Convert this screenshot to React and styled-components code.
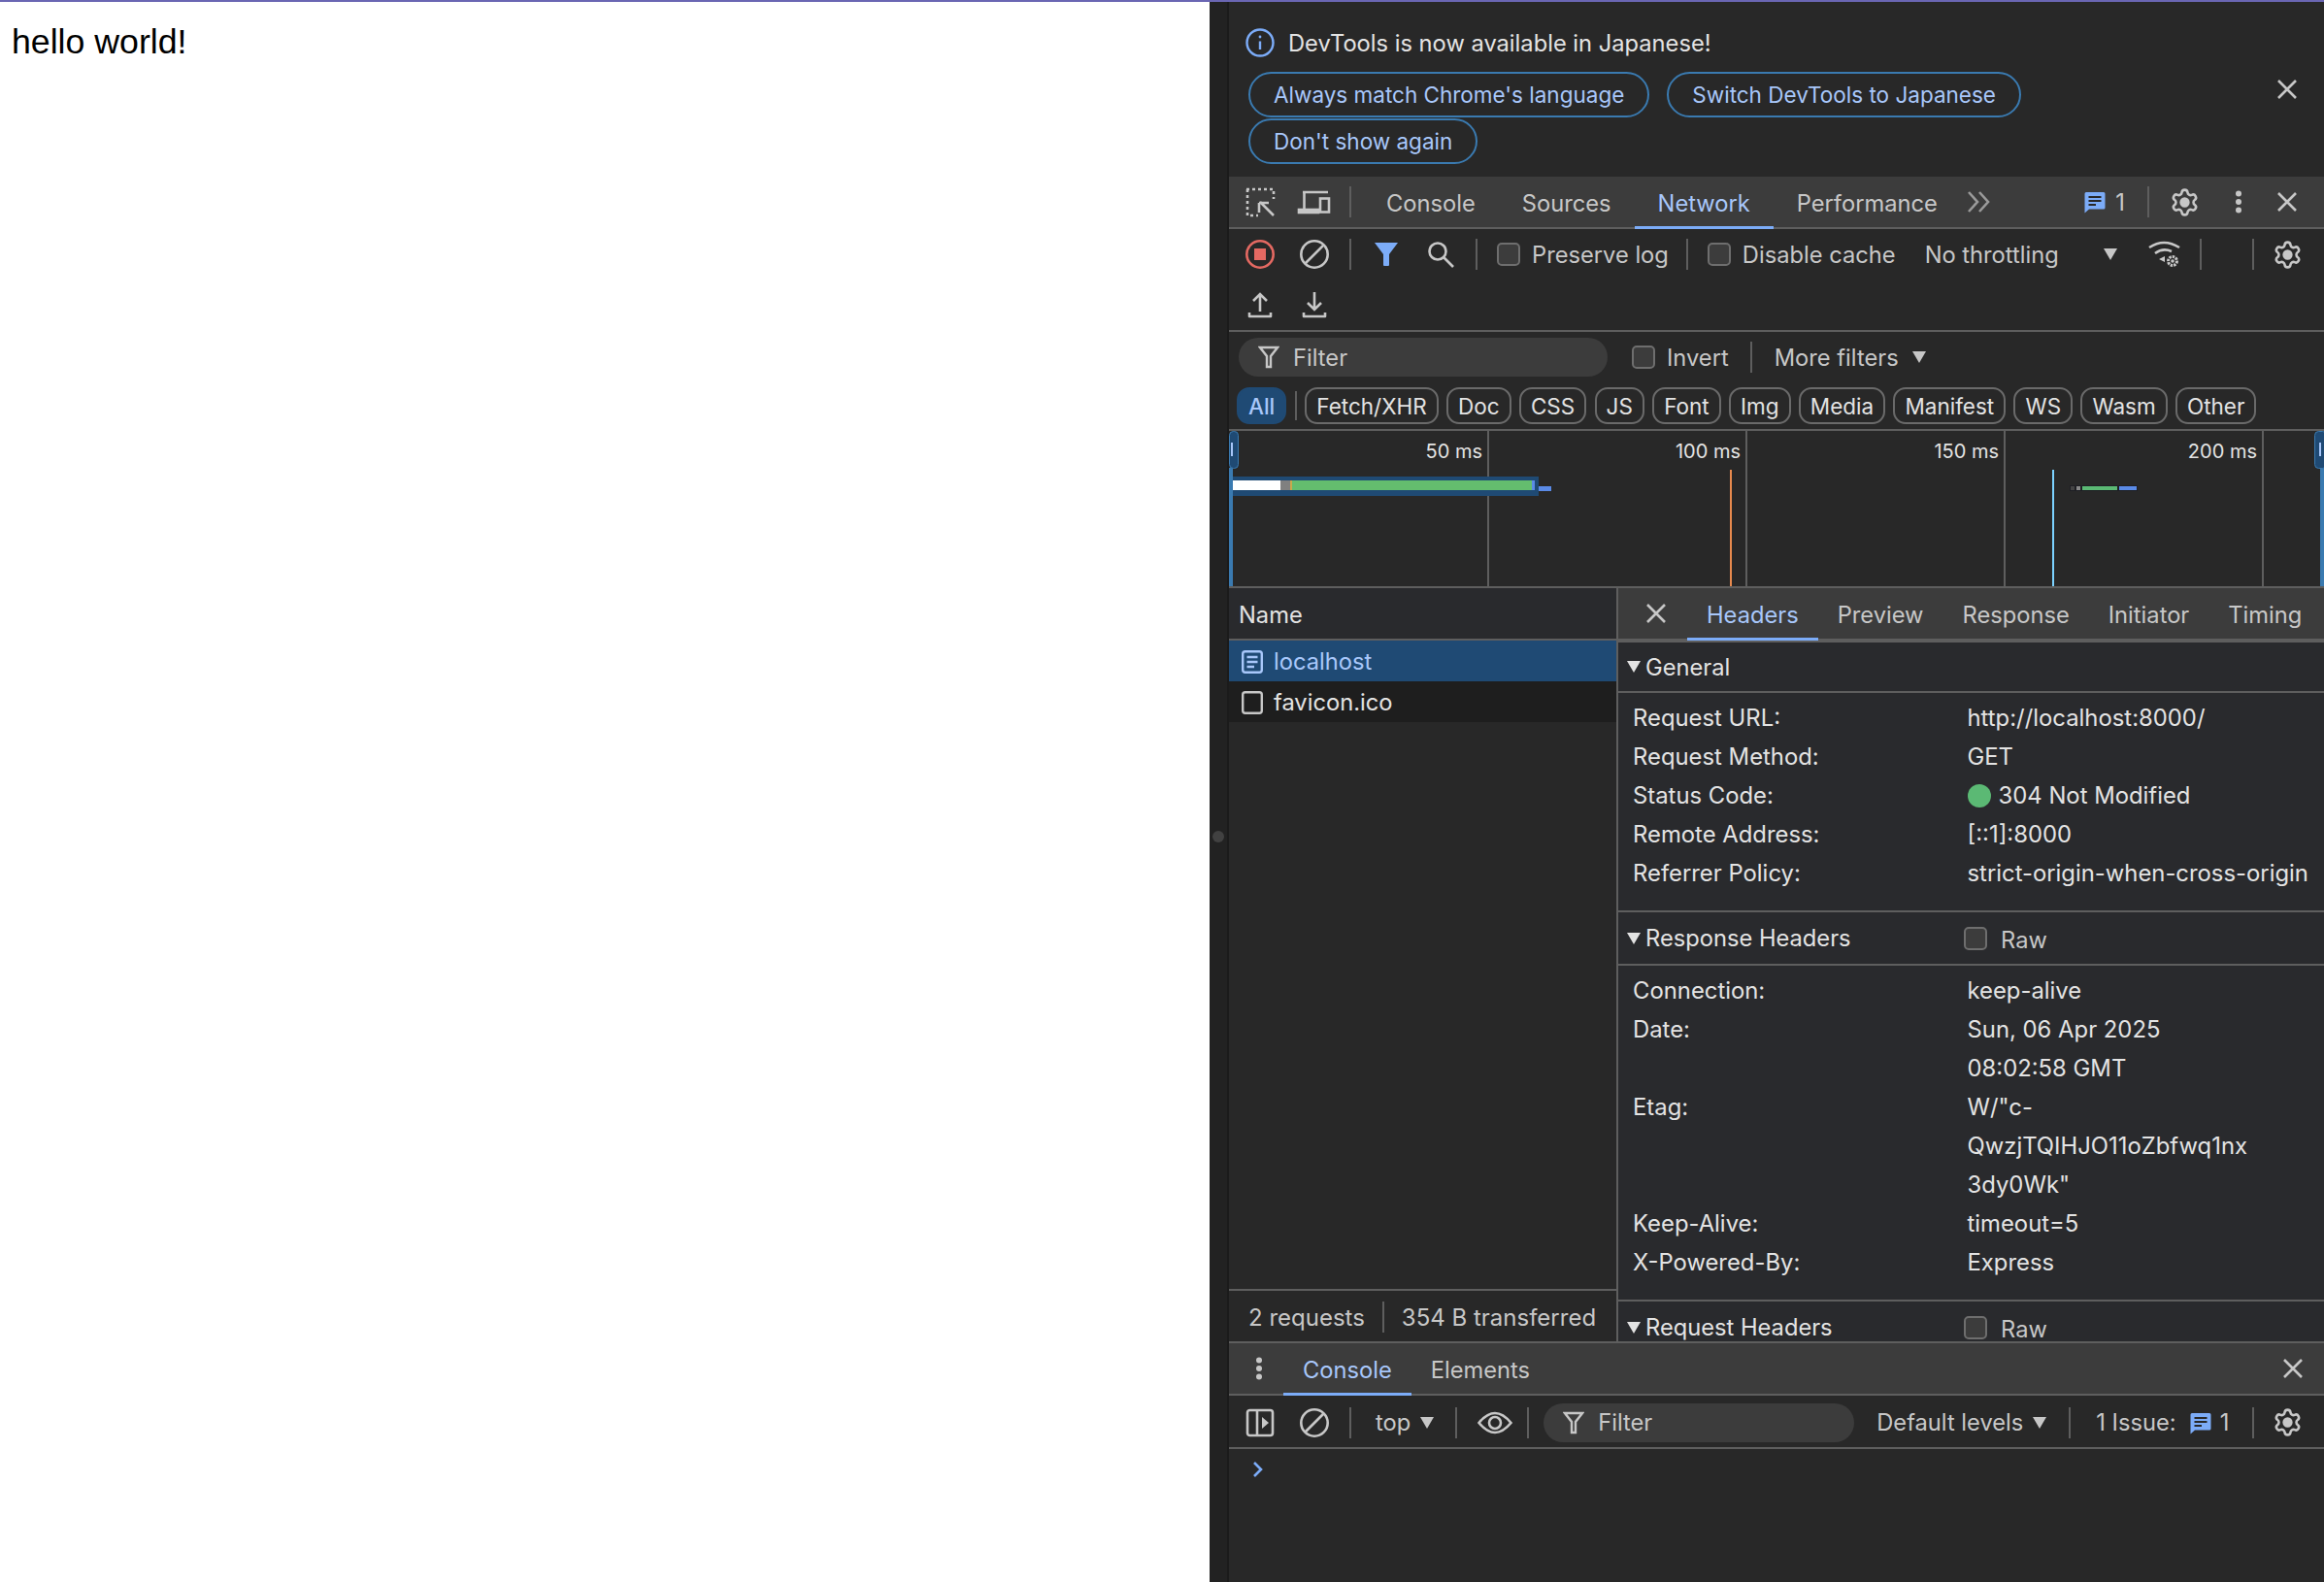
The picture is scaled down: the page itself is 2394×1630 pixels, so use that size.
import styled, { createGlobalStyle } from "styled-components";
import { Settings } from "lucide-react";

const GlobalStyle = createGlobalStyle`
    html, body {
        margin: 0;
        padding: 0;
        background: #fff;
        overflow: hidden;
    }
    * {
        box-sizing: border-box;
    }
`;

const line = "#5e5e5e";
const blue = "#a8c7fa";
const accent = "#7cacf8";

const Page = styled.div`
    width: 2394px;
    height: 1630px;
    display: flex;
    flex-direction: column;
    font-family: Inter, "Liberation Sans", sans-serif;
    font-size: 23.7px;
    color: #e3e3e3;
`;

const TopStrip = styled.div`
    height: 2px;
    flex: none;
    background: #6a66b3;
`;

const Body = styled.div`
    flex: 1;
    min-height: 0;
    display: flex;
`;

const Inspected = styled.div`
    width: 1246px;
    flex: none;
    background: #fff;
    padding: 20px 12px;
`;

const Hello = styled.div`
    font-family: "Liberation Sans", Arial, sans-serif;
    font-size: 35.7px;
    line-height: 42px;
    color: #000;
`;

const Resizer = styled.div`
    width: 20px;
    flex: none;
    background: #222;
    border-right: 2px solid #1b1b1b;
    display: flex;
    justify-content: center;
    padding-top: 854px;
`;

const ResizerDot = styled.div`
    width: 12px;
    height: 12px;
    border-radius: 50%;
    background: #414141;
`;

const DevTools = styled.div`
    flex: 1;
    min-width: 0;
    display: flex;
    flex-direction: column;
    background: #282828;
`;

const Infobar = styled.div`
    height: 180px;
    flex: none;
    display: flex;
    align-items: center;
    padding: 0 10px 0 20px;
`;

const InfoMain = styled.div`
    flex: 1;
    padding-top: 14px;
`;

const InfoTitle = styled.div`
    display: flex;
    align-items: center;
    gap: 14px;
    margin: 0 0 15px -3px;
    height: 30px;
`;

const InfoActions = styled.div`
    display: flex;
    flex-wrap: wrap;
    gap: 1px 18px;
    width: 900px;
`;

const PillButton = styled.button`
    height: 47px;
    padding: 0 24px;
    border: 2px solid #3a7ab0;
    border-radius: 24px;
    background: transparent;
    color: ${blue};
    font-family: inherit;
    font-size: 22.5px;
`;

const TabBar = styled.div`
    height: ${(p) => p.$h || 54}px;
    flex: none;
    display: flex;
    align-items: stretch;
    background: #3c3c3c;
    border-bottom: ${(p) => p.$line || 2}px solid ${line};
    padding: ${(p) => p.$pad || "0 10px 0 4px"};
`;

const Tab = styled.div`
    display: flex;
    align-items: center;
    padding: 0 ${(p) => p.$pad || 24}px;
    margin-bottom: -2px;
    margin-left: ${(p) => p.$ml || 0}px;
    color: ${(p) => (p.$active ? blue : "#c7c7c7")};
    box-shadow: ${(p) => (p.$active ? `inset 0 -3px 0 ${accent}` : "none")};
`;

const Toolbar = styled.div`
    height: ${(p) => p.$h || 52}px;
    flex: none;
    display: flex;
    align-items: center;
    padding: ${(p) => p.$top || 0}px 10px 0 4px;
    color: #c7c7c7;
`;

const ToolbarStack = styled.div`
    flex: none;
    border-bottom: 2px solid ${line};
`;

const IconSlot = styled.span`
    width: ${(p) => p.$w || 56}px;
    height: 36px;
    flex: none;
    align-self: center;
    display: flex;
    align-items: center;
    justify-content: center;
    color: ${(p) => p.$color || "#c7c7c7"};
    margin-left: ${(p) => p.$ml || 0}px;
`;

const Sep = styled.span`
    width: 2px;
    height: 32px;
    flex: none;
    background: ${line};
    margin: 0 ${(p) => (p.$m === undefined ? 8 : p.$m)}px;
    margin-left: ${(p) => (p.$ml === undefined ? "" : `${p.$ml}px`)};
    align-self: center;
`;

const Spacer = styled.span`
    flex: 1;
`;

const Gear = styled(Settings)`
    circle {
        fill: currentColor;
    }
`;

const CheckLabel = styled.label`
    display: flex;
    align-items: center;
    gap: 12px;
    margin: 0 ${(p) => p.$mr || 10}px 0 ${(p) => p.$ml || 12}px;
    color: #c7c7c7;
`;

const Checkbox = styled.span`
    width: 24px;
    height: 24px;
    flex: none;
    background: #3c3c3c;
    border: 2px solid #6e6e6e;
    border-radius: 5px;
`;

const Select = styled.span`
    display: flex;
    align-items: center;
    gap: ${(p) => p.$gap || 10}px;
    margin-left: ${(p) => p.$ml || 0}px;
    margin-right: ${(p) => p.$mr || 0}px;
    color: #c7c7c7;
`;

const FilterPill = styled.div`
    width: ${(p) => p.$w}px;
    height: 40px;
    flex: none;
    display: flex;
    align-items: center;
    gap: 14px;
    padding-left: 20px;
    border-radius: 20px;
    background: #3c3c3c;
    color: #c7c7c7;
    margin-left: ${(p) => p.$ml || 0}px;
`;

const ChipRow = styled.div`
    height: 50px;
    flex: none;
    display: flex;
    align-items: center;
    gap: 8.3px;
    padding-left: 8px;
    border-bottom: 2px solid ${line};
    font-size: 22.5px;
`;

const Chip = styled.span`
    height: 38px;
    display: flex;
    align-items: center;
    padding: 0 ${(p) => p.$pad || 10}px;
    border: 2px solid ${(p) => (p.$active ? "#1f4a74" : "#6a6a6a")};
    border-radius: 13px;
    background: ${(p) => (p.$active ? "#1f4a74" : "transparent")};
    color: ${(p) => (p.$active ? blue : "#e3e3e3")};
    font-weight: ${(p) => (p.$active ? 500 : 400)};
`;

const ChipSep = styled.span`
    width: 2px;
    height: 30px;
    margin: 0 0 0 0.4px;
    background: ${line};
`;

const Overview = styled.div`
    height: 162px;
    flex: none;
    position: relative;
    display: grid;
    grid-template-columns: 268px repeat(3, 266px) 1fr;
    border-bottom: 2px solid ${line};
`;

const TimeCell = styled.div`
    border-right: ${(p) => (p.$last ? "none" : `2px solid ${line}`)};
    padding: 8px 5px 0 0;
    text-align: right;
    font-size: 20px;
    line-height: 26px;
`;

const OverviewChart = styled.svg`
    position: absolute;
    left: 0;
    top: 0;
`;

const Split = styled.div`
    height: 778px;
    flex: none;
    display: flex;
    border-bottom: 2px solid ${line};
`;

const NamePane = styled.div`
    width: 401px;
    flex: none;
    display: flex;
    flex-direction: column;
    border-right: 2px solid ${line};
`;

const NameHeader = styled.div`
    height: 54px;
    flex: none;
    display: flex;
    align-items: center;
    padding: 2px 0 0 10px;
    background: #292a2d;
    border-bottom: 2px solid ${line};
`;

const RequestRow = styled.div`
    height: 42px;
    flex: none;
    display: flex;
    align-items: center;
    gap: 11px;
    padding: 1px 0 0 13px;
    background: ${(p) => (p.$selected ? "#1f4a74" : "#1e1e1e")};
    color: ${(p) => (p.$selected ? blue : "#e3e3e3")};
`;

const NameFooter = styled.div`
    height: 54px;
    flex: none;
    margin-top: auto;
    display: flex;
    align-items: center;
    padding: 2px 0 0 20px;
    border-top: 2px solid ${line};
    color: #c7c7c7;
    font-size: 24px;
`;

const DetailsPane = styled.div`
    flex: 1;
    min-width: 0;
    display: flex;
    flex-direction: column;
    overflow: hidden;
    background: #292a2d;
`;

const SectionHeader = styled.div`
    height: ${(p) => p.$h || 55}px;
    flex: none;
    display: grid;
    grid-template-columns: 347px 1fr;
    align-items: center;
    padding-left: 9px;
    border-bottom: 2px solid ${line};
`;

const SectionTitle = styled.span`
    display: flex;
    align-items: center;
    gap: 5px;
`;

const SectionRows = styled.div`
    flex: none;
    padding: 6px 0 18px 15px;
    border-bottom: 2px solid ${line};
    font-size: 23.85px;
`;

const DetailRow = styled.div`
    display: grid;
    grid-template-columns: 344.5px 1fr;
    line-height: 40px;
`;

const StatusDot = styled.span`
    display: inline-block;
    width: 24px;
    height: 24px;
    border-radius: 50%;
    background: #5bb974;
    margin-right: 8px;
    vertical-align: -4px;
`;

const RawLabel = styled.label`
    display: flex;
    align-items: center;
    gap: 14px;
    color: #c7c7c7;
    line-height: 28px;
`;

const RawText = styled.span`
    position: relative;
    top: 2px;
`;

const Drawer = styled.div`
    flex: 1;
    min-height: 0;
    display: flex;
    flex-direction: column;
`;

const Prompt = styled.div`
    padding: 7px 0 0 24px;
    color: ${accent};
`;

const CLOSE = (
    <svg width="24" height="24" viewBox="0 0 24 24" fill="none" stroke="currentColor" strokeWidth="2.6">
        <path d="M3 3 L21 21 M21 3 L3 21" />
    </svg>
);

const Triangle = ({ color = "#c7c7c7" }) => (
    <svg width="14" height="12" viewBox="0 0 14 12">
        <polygon points="0,0 14,0 7,12" fill={color} />
    </svg>
);

const InfoIcon = () => (
    <svg width="30" height="30" viewBox="0 0 30 30" fill="none" stroke={accent} strokeWidth="2.4">
        <circle cx="15" cy="15" r="13.5" />
        <path d="M15 13.5 V22" />
        <circle cx="15" cy="9" r="1.4" fill={accent} stroke="none" />
    </svg>
);

const InspectIcon = () => (
    <svg width="32" height="32" viewBox="0 0 32 32" fill="none" stroke="currentColor" strokeWidth="2.6">
        <path d="M2 3 H30 V13 M3 3 V30 H14" strokeDasharray="3 3" />
        <path d="M16 16 L30 30 M15 17 V27 M15 17 H25" />
    </svg>
);

const DeviceIcon = () => (
    <svg width="36" height="32" viewBox="0 0 36 32" fill="none" stroke="currentColor" strokeWidth="2.6">
        <path d="M6 6 H32 M7.5 6 V24" />
        <rect x="2" y="24" width="20" height="3" fill="currentColor" />
        <rect x="24" y="12.5" width="9" height="14" />
    </svg>
);

const RecordIcon = () => (
    <svg width="32" height="32" viewBox="0 0 32 32" fill="none">
        <circle cx="16" cy="16" r="13.7" stroke="#e46962" strokeWidth="2.6" />
        <rect x="10" y="10" width="12" height="12" fill="#e46962" />
    </svg>
);

const ClearIcon = () => (
    <svg width="32" height="32" viewBox="0 0 32 32" fill="none" stroke="currentColor" strokeWidth="2.6">
        <circle cx="16" cy="16" r="13.7" />
        <path d="M6.5 25.5 L25.5 6.5" />
    </svg>
);

const FunnelSolid = () => (
    <svg width="32" height="32" viewBox="0 0 32 32">
        <path d="M4 4 H28 L19 16 V27 Q19 28 18 28 H14 Q13 28 13 27 V16 Z" fill={accent} />
    </svg>
);

const FunnelOutline = () => (
    <svg width="22" height="26" viewBox="0 0 22 26" fill="none" stroke="currentColor" strokeWidth="2.4">
        <path d="M2 3 H20 L13 12 V23 H9 V12 Z" />
    </svg>
);

const SearchIcon = () => (
    <svg width="32" height="32" viewBox="0 0 32 32" fill="none" stroke="currentColor" strokeWidth="2.6">
        <circle cx="13" cy="13" r="8.5" />
        <path d="M19 19 L29 29" />
    </svg>
);

const WifiIcon = () => (
    <svg width="36" height="32" viewBox="0 0 36 32" fill="none" stroke="currentColor" strokeWidth="2.6">
        <path d="M2 9 Q17 -1 33 9" />
        <path d="M8 15 Q16 9 25 13" />
        <polygon points="18,18 12,21 18,24" fill="currentColor" stroke="none" />
        <circle cx="26" cy="23" r="4.5" strokeWidth="3" strokeDasharray="2.4 1" />
        <circle cx="26" cy="23" r="1.8" fill="currentColor" stroke="none" />
    </svg>
);

const UploadIcon = () => (
    <svg width="32" height="32" viewBox="0 0 32 32" fill="none" stroke="currentColor" strokeWidth="2.6">
        <path d="M16 5 V23 M9 12 L16 5 L23 12" />
        <path d="M5 24 V28 H27 V24" strokeLinejoin="round" />
    </svg>
);

const DownloadIcon = () => (
    <svg width="32" height="32" viewBox="0 0 32 32" fill="none" stroke="currentColor" strokeWidth="2.6">
        <path d="M16 3 V21 M9 14 L16 21 L23 14" />
        <path d="M5 24 V28 H27 V24" strokeLinejoin="round" />
    </svg>
);

const ChevronsIcon = () => (
    <svg width="26" height="24" viewBox="0 0 26 24" fill="none" stroke="#9a9a9a" strokeWidth="2.6">
        <path d="M2 2 L11 12 L2 22 M13 2 L22 12 L13 22" />
    </svg>
);

const IssueIcon = () => (
    <svg width="22" height="24" viewBox="0 0 22 24">
        <path d="M2 2 H20 Q21.5 2 21.5 3.5 V18 Q21.5 19.5 20 19.5 H5 L0.5 23.5 V3.5 Q0.5 2 2 2 Z" fill={accent} />
        <path d="M4.5 7 H17.5 M4.5 11 H17.5 M4.5 15 H12" stroke="#282828" strokeWidth="2" />
    </svg>
);

const KebabIcon = () => (
    <svg width="8" height="24" viewBox="0 0 8 24" fill="currentColor">
        <circle cx="4" cy="3.5" r="3" />
        <circle cx="4" cy="12" r="3" />
        <circle cx="4" cy="20.5" r="3" />
    </svg>
);

const DocIcon = ({ color, lines }) => (
    <svg width="22" height="24" viewBox="0 0 22 24" fill="none" stroke={color} strokeWidth="2.4">
        <rect x="1.2" y="1.2" width="19.6" height="21.6" rx="2.5" />
        {lines && <path d="M5.5 7 H16.5 M5.5 12 H16.5 M5.5 17 H13" />}
    </svg>
);

const SidebarIcon = () => (
    <svg width="32" height="32" viewBox="0 0 32 32" fill="none" stroke="currentColor" strokeWidth="2.6">
        <rect x="3" y="3" width="26" height="26" rx="2.5" />
        <path d="M13 3 V29" />
        <polygon points="18,10 25,16 18,22" fill="currentColor" stroke="none" />
    </svg>
);

const EyeIcon = () => (
    <svg width="36" height="28" viewBox="0 0 36 28" fill="none" stroke="currentColor" strokeWidth="2.6">
        <path d="M1.5 14 Q18 -6 34.5 14 Q18 34 1.5 14 Z" />
        <circle cx="18" cy="14" r="6" />
    </svg>
);

const PromptIcon = () => (
    <svg width="12" height="18" viewBox="0 0 12 18" fill="none" stroke="currentColor" strokeWidth="2.6">
        <path d="M2 2 L9 9 L2 16" />
    </svg>
);

const CHIPS = ["Fetch/XHR", "Doc", "CSS", "JS", "Font", "Img", "Media", "Manifest", "WS", "Wasm", "Other"];

const GENERAL = [
    ["Request URL:", "http://localhost:8000/"],
    ["Request Method:", "GET"],
    ["Status Code:", <><StatusDot />304 Not Modified</>],
    ["Remote Address:", "[::1]:8000"],
    ["Referrer Policy:", "strict-origin-when-cross-origin"],
];

const RESPONSE = [
    ["Connection:", "keep-alive"],
    ["Date:", <>Sun, 06 Apr 2025<br />08:02:58 GMT</>],
    ["Etag:", <>W/"c-<br />QwzjTQIHJO11oZbfwq1nx<br />3dy0Wk"</>],
    ["Keep-Alive:", "timeout=5"],
    ["X-Powered-By:", "Express"],
];

// coordinates are relative to the overview box, which starts at x=1266
const Timeline = () => (
    <OverviewChart width="1128" height="160" viewBox="0 0 1128 160">
        <rect x="0" y="38" width="4" height="122" fill="#3a7ab0" />
        <rect x="1124" y="38" width="4" height="122" fill="#3a7ab0" />
        <rect x="0.5" y="0.5" width="9" height="38" rx="4" fill="#1f4a74" stroke="#3a7ab0" />
        <rect x="1118.5" y="0.5" width="12" height="38" rx="4" fill="#1f4a74" stroke="#3a7ab0" />
        <rect x="2" y="12" width="2" height="14" fill={blue} />
        <rect x="1123" y="12" width="2" height="14" fill={blue} />

        <rect x="516" y="40" width="2" height="120" fill="#e88a4e" />
        <rect x="848" y="40" width="2" height="120" fill="#7cd2ff" />

        <rect x="4" y="47" width="315" height="20" fill="#1f4a74" />
        <rect x="4" y="51" width="49" height="10" fill="#fff" />
        <rect x="53" y="51" width="10" height="10" fill="#808080" />
        <rect x="63" y="51" width="2" height="10" fill="#c9a84c" />
        <rect x="65" y="51" width="247" height="10" fill="#64bd6e" />
        <rect x="312" y="51" width="3" height="10" fill="#5a8ae6" />
        <rect x="319" y="57" width="13" height="5" fill="#5a8ae6" />

        <rect x="866" y="56" width="70" height="6" fill="#1e1f24" />
        <rect x="867" y="57" width="4" height="4" fill="#444" />
        <rect x="873" y="57" width="4" height="4" fill="#888" />
        <rect x="879" y="57" width="36" height="4" fill="#5bb974" />
        <rect x="917" y="57" width="18" height="4" fill="#5a8ae6" />
    </OverviewChart>
);

const App = () => {
    return (
        <Page>
            <GlobalStyle />
            <TopStrip />
            <Body>
                <Inspected>
                    <Hello>hello world!</Hello>
                </Inspected>
                <Resizer>
                    <ResizerDot />
                </Resizer>
                <DevTools>
                    <Infobar>
                        <InfoMain>
                            <InfoTitle>
                                <InfoIcon />
                                DevTools is now available in Japanese!
                            </InfoTitle>
                            <InfoActions>
                                <PillButton>Always match Chrome's language</PillButton>
                                <PillButton>Switch DevTools to Japanese</PillButton>
                                <PillButton>Don't show again</PillButton>
                            </InfoActions>
                        </InfoMain>
                        <IconSlot>{CLOSE}</IconSlot>
                    </Infobar>

                    <TabBar>
                        <IconSlot><InspectIcon /></IconSlot>
                        <IconSlot><DeviceIcon /></IconSlot>
                        <Sep />
                        <Tab $ml={4}>Console</Tab>
                        <Tab>Sources</Tab>
                        <Tab $active>Network</Tab>
                        <Tab>Performance</Tab>
                        <IconSlot $w={38}><ChevronsIcon /></IconSlot>
                        <Spacer />
                        <Select $gap={10} $mr={21}>
                            <IssueIcon />1
                        </Select>
                        <Sep $m={2} />
                        <IconSlot $w={68}><Gear size={31} strokeWidth={2} /></IconSlot>
                        <IconSlot $w={44}><KebabIcon /></IconSlot>
                        <IconSlot>{CLOSE}</IconSlot>
                    </TabBar>

                    <ToolbarStack>
                        <Toolbar>
                            <IconSlot><RecordIcon /></IconSlot>
                            <IconSlot><ClearIcon /></IconSlot>
                            <Sep />
                            <IconSlot><FunnelSolid /></IconSlot>
                            <IconSlot><SearchIcon /></IconSlot>
                            <Sep />
                            <CheckLabel><Checkbox />Preserve log</CheckLabel>
                            <Sep />
                            <CheckLabel><Checkbox />Disable cache</CheckLabel>
                            <Select $gap={46} $ml={20} $mr={21}>
                                No throttling
                                <Triangle />
                            </Select>
                            <IconSlot><WifiIcon /></IconSlot>
                            <Sep />
                            <Spacer />
                            <Sep $m={6} />
                            <IconSlot><Gear size={31} strokeWidth={2} /></IconSlot>
                        </Toolbar>
                        <Toolbar>
                            <IconSlot><UploadIcon /></IconSlot>
                            <IconSlot><DownloadIcon /></IconSlot>
                        </Toolbar>
                    </ToolbarStack>

                    <Toolbar>
                        <FilterPill $w={380} $ml={6}>
                            <FunnelOutline />
                            Filter
                        </FilterPill>
                        <CheckLabel $ml={25} $mr={14}>
                            <Checkbox />Invert
                        </CheckLabel>
                        <Sep />
                        <Select $gap={14} $ml={15}>
                            More filters
                            <Triangle />
                        </Select>
                    </Toolbar>

                    <ChipRow>
                        <Chip $active>All</Chip>
                        <ChipSep />
                        {CHIPS.map((chip) => (
                            <Chip key={chip}>{chip}</Chip>
                        ))}
                    </ChipRow>

                    <Overview>
                        <TimeCell>50 ms</TimeCell>
                        <TimeCell>100 ms</TimeCell>
                        <TimeCell>150 ms</TimeCell>
                        <TimeCell>200 ms</TimeCell>
                        <TimeCell $last />
                        <Timeline />
                    </Overview>

                    <Split>
                        <NamePane>
                            <NameHeader>Name</NameHeader>
                            <RequestRow $selected>
                                <DocIcon color={blue} lines />
                                localhost
                            </RequestRow>
                            <RequestRow>
                                <DocIcon color="#c7c7c7" />
                                favicon.ico
                            </RequestRow>
                            <NameFooter>
                                2 requests
                                <Sep $m={18} />
                                354 B transferred
                            </NameFooter>
                        </NamePane>
                        <DetailsPane>
                            <TabBar $h={56} $line={4} $pad="0">
                                <IconSlot $w={64} $ml={7}>{CLOSE}</IconSlot>
                                <Tab $pad={20} $active>Headers</Tab>
                                <Tab $pad={20}>Preview</Tab>
                                <Tab $pad={20}>Response</Tab>
                                <Tab $pad={20}>Initiator</Tab>
                                <Tab $pad={20}>Timing</Tab>
                            </TabBar>
                            <SectionHeader $h={52}>
                                <SectionTitle><Triangle color="#e3e3e3" />General</SectionTitle>
                            </SectionHeader>
                            <SectionRows>
                                {GENERAL.map(([label, value]) => (
                                    <DetailRow key={label}>
                                        <span>{label}</span>
                                        <span>{value}</span>
                                    </DetailRow>
                                ))}
                            </SectionRows>
                            <SectionHeader>
                                <SectionTitle><Triangle color="#e3e3e3" />Response Headers</SectionTitle>
                                <RawLabel><Checkbox /><RawText>Raw</RawText></RawLabel>
                            </SectionHeader>
                            <SectionRows>
                                {RESPONSE.map(([label, value]) => (
                                    <DetailRow key={label}>
                                        <span>{label}</span>
                                        <span>{value}</span>
                                    </DetailRow>
                                ))}
                            </SectionRows>
                            <SectionHeader>
                                <SectionTitle><Triangle color="#e3e3e3" />Request Headers</SectionTitle>
                                <RawLabel><Checkbox /><RawText>Raw</RawText></RawLabel>
                            </SectionHeader>
                        </DetailsPane>
                    </Split>

                    <Drawer>
                        <TabBar $pad="0 4px 0 6px">
                            <IconSlot $w={50}><KebabIcon /></IconSlot>
                            <Tab $pad={20} $active>Console</Tab>
                            <Tab $pad={20}>Elements</Tab>
                            <Spacer />
                            <IconSlot>{CLOSE}</IconSlot>
                        </TabBar>
                        <ToolbarStack>
                            <Toolbar $h={53} $top={2}>
                                <IconSlot><SidebarIcon /></IconSlot>
                                <IconSlot><ClearIcon /></IconSlot>
                                <Sep />
                                <Select $ml={17}>top<Triangle /></Select>
                                <Sep $ml={22} />
                                <IconSlot $w={50} $ml={6}><EyeIcon /></IconSlot>
                                <Sep />
                                <FilterPill $w={320} $ml={7}>
                                    <FunnelOutline />
                                    Filter
                                </FilterPill>
                                <Select $ml={23}>Default levels<Triangle /></Select>
                                <Sep $ml={23} />
                                <Select $gap={14} $ml={18}>
                                    1 Issue:
                                    <Select $gap={9}><IssueIcon />1</Select>
                                </Select>
                                <Spacer />
                                <Sep $m={6} />
                                <IconSlot><Gear size={31} strokeWidth={2} /></IconSlot>
                            </Toolbar>
                        </ToolbarStack>
                        <Prompt><PromptIcon /></Prompt>
                    </Drawer>
                </DevTools>
            </Body>
        </Page>
    );
};

export default App;
